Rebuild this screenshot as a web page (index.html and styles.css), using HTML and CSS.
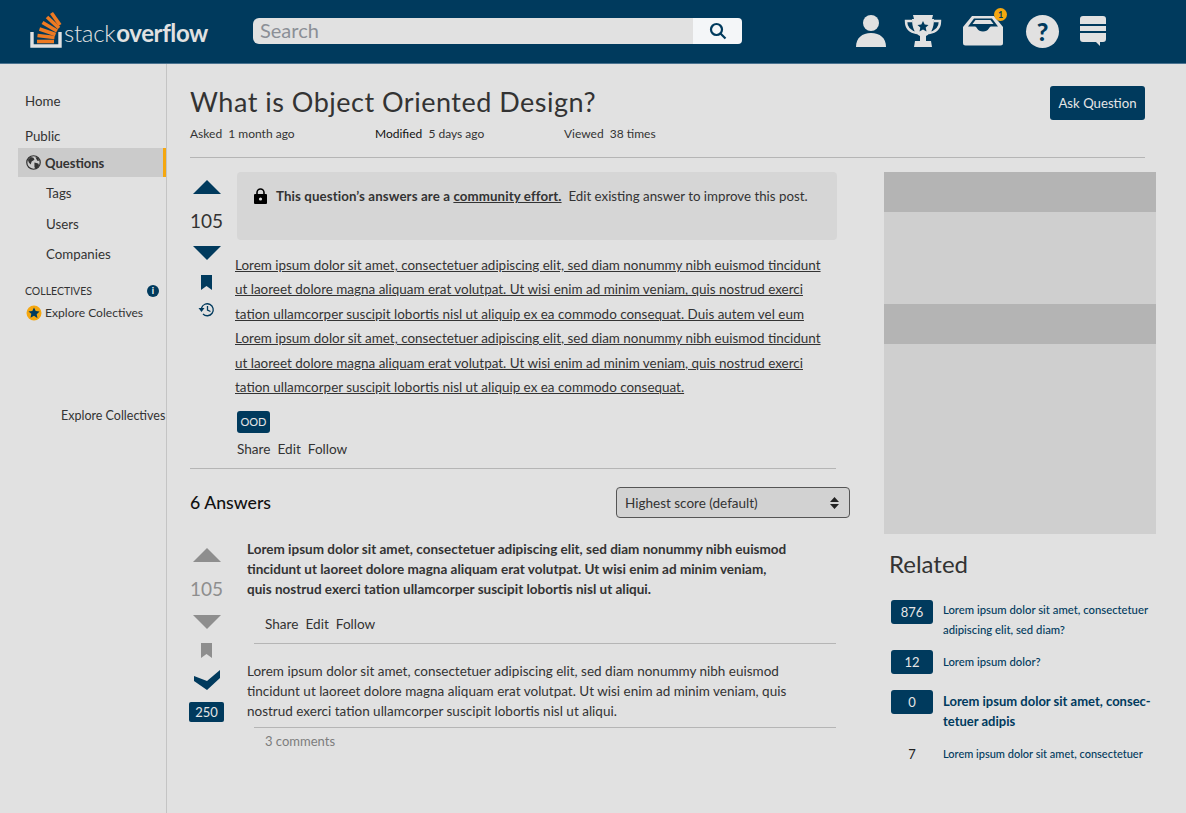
FILE: index.html
```html
<!DOCTYPE html>
<html lang="en">
<head>
  <meta charset="UTF-8" />
  <meta name="viewport" content="width=device-width, initial-scale=1.0" />
  <title>What is Object Oriented Design?</title>
  <link rel="stylesheet" href="styles.css">
</head>
<body>
  <header class="topbar">
    <a class="logo">
      <svg class="logo-mark" width="34" height="36" viewBox="0 0 34 36">
        <path d="M2 20v14h28V20" fill="none" stroke="#e1e1e1" stroke-width="3.4"/>
        <g stroke="#ee7a22" stroke-width="3.6" fill="none">
          <path d="M7 29.500h17"/>
          <path d="M7.500 23.500l17 2"/>
          <path d="M9.500 17l16 5.500"/>
          <path d="M12.500 10.500l14.500 8.500"/>
          <path d="M17 5l12 11"/>
          <path d="M21.500 1l8.500 12"/>
        </g>
      </svg>
      <span class="logo-text">stack<b>overflow</b></span>
    </a>
    <div class="search">
      <span class="search-input">Search</span>
      <span class="search-btn">
        <svg width="18" height="18" viewBox="0 0 18 18" fill="none" stroke="#003a5d" stroke-width="2.200"><circle cx="7.500" cy="7.500" r="5.500"/><path d="M11.500 11.500l5 5"/></svg>
      </span>
    </div>
    <nav class="top-icons">
      <svg width="30" height="34" viewBox="0 0 30 34" fill="#e1e1e1"><circle cx="15" cy="9" r="8"/><path d="M0 33c0-9 6-14 15-14s15 5 15 14z"/></svg>
      <svg width="38" height="34" viewBox="0 0 38 34"><path d="M9 1h20l-1 4H10z" fill="#e1e1e1"/><path d="M8 7H2c0 7 4 11 11 12M30 7h6c0 7-4 11-11 12" fill="none" stroke="#e1e1e1" stroke-width="2.400"/><path d="M8 5h22c0 9-3 15-8 17v5h5l1 6H10l1-6h5v-5C11 20 8 14 8 5z" fill="#e1e1e1"/><path d="M19 7l1.700 3.600 3.800.4-2.800 2.600.8 3.900-3.500-2-3.500 2 .8-3.900-2.800-2.600 3.800-.4z" fill="#003a5d"/></svg>
      <span class="inbox">
        <svg width="40" height="30" viewBox="0 0 40 30"><path d="M9 0h22l9 11v16a2.500 2.500 0 0 1-2.500 2.500h-35A2.500 2.500 0 0 1 0 27V11z" fill="#e1e1e1"/><path d="M11 2.500h18l6 8h-7c-2 0-2 5-8 5s-6-5-8-5H5z" fill="#003a5d"/><path d="M12.500 4h15l3 4h-21z" fill="#e1e1e1"/></svg>
        <i class="inbox-dot">1</i>
      </span>
      <span class="help">?</span>
      <svg width="26" height="32" viewBox="0 0 26 32" fill="#e1e1e1"><path d="M0 4a3 3 0 0 1 3-3h20a3 3 0 0 1 3 3v5H0z"/><rect y="11" width="26" height="5"/><path d="M0 18h26v6a3 3 0 0 1-3 3h-3v4l-4-4H3a3 3 0 0 1-3-3z"/></svg>
    </nav>
  </header>

  <div class="layout">
    <aside class="sidebar">
      <a class="nav-home">Home</a>
      <p class="nav-label">Public</p>
      <a class="nav-active">
        <svg width="15" height="15" viewBox="0 0 16 16"><circle cx="8" cy="8" r="7.200" fill="none" stroke="#333" stroke-width="1.300"/><path d="M5 2l3 1 1 2-3 2-1 3-2-2-1-3zM9 8l4 1 1 2-3 4-2-2z M10 2l3 1 1 3-2 0z" fill="#333"/></svg>
        Questions
      </a>
      <a class="nav-sub">Tags</a>
      <a class="nav-sub">Users</a>
      <a class="nav-sub">Companies</a>
      <div class="collectives-head">
        <span>COLLECTIVES</span>
        <i class="info">i</i>
      </div>
      <a class="collective-link">
        <svg width="16" height="16" viewBox="0 0 16 16"><circle cx="8" cy="8" r="7.500" fill="#f5a70f"/><path d="M8 2.500l1.700 3.600 3.900.5-2.900 2.700.8 3.900L8 10.800l-3.500 1.900.8-3.900L2.400 6.600l3.900-.5z" fill="#003a5d"/></svg>
        Explore Colectives
      </a>
      <p class="stray-link">Explore Collectives</p>
    </aside>

    <main class="content">
      <div class="title-row">
        <div>
          <h1>What is Object Oriented Design?</h1>
          <div class="meta">
            <span class="meta-asked">Asked&nbsp; <em>1 month ago</em></span>
            <span class="meta-modified"><b>Modified</b>&nbsp; <em>5 days ago</em></span>
            <span>Viewed&nbsp; <em>38 times</em></span>
          </div>
        </div>
        <a class="ask-btn">Ask Question</a>
      </div>

      <div class="columns">
        <section class="main-col">
          <div class="post">
            <div class="votes">
              <i class="arrow-up"></i>
              <span class="score">105</span>
              <i class="arrow-down"></i>
              <svg class="bookmark" width="11" height="15" viewBox="0 0 11 15" fill="#003a5d"><path d="M0 0h11v15l-5.500-4L0 15z"/></svg>
              <svg class="history" width="17" height="15" viewBox="0 0 17 15" fill="none" stroke="#003a5d" stroke-width="1.300"><path d="M3.500 6a6 6 0 1 1 1.500 6"/><path d="M9.500 4v4l3 1.500"/><path d="M0.500 6h6L3.500 10z" fill="#003a5d" stroke="none"/></svg>
            </div>
            <div class="post-body">
              <div class="notice">
                <svg width="13" height="16" viewBox="0 0 13 16"><path d="M3 7V4.500a3.500 3.500 0 0 1 7 0V7" fill="none" stroke="#000" stroke-width="1.600"/><rect y="6" width="13" height="10" rx="1"/><circle cx="6.500" cy="11" r="1.600" fill="#e1e1e1"/></svg>
                <p><b>This question’s answers are a <u>community effort.</u></b>&nbsp; Edit existing answer to improve this post.</p>
              </div>
              <p class="lorem">Lorem ipsum dolor sit amet, consectetuer adipiscing elit, sed diam nonummy nibh euismod tincidunt<br>ut laoreet dolore magna aliquam erat volutpat. Ut wisi enim ad minim veniam, quis nostrud exerci<br>tation ullamcorper suscipit lobortis nisl ut aliquip ex ea commodo consequat. Duis autem vel eum<br>Lorem ipsum dolor sit amet, consectetuer adipiscing elit, sed diam nonummy nibh euismod tincidunt<br>ut laoreet dolore magna aliquam erat volutpat. Ut wisi enim ad minim veniam, quis nostrud exerci<br>tation ullamcorper suscipit lobortis nisl ut aliquip ex ea commodo consequat.</p>
              <span class="tag">OOD</span>
              <div class="actions">
                <a>Share</a><a>Edit</a><a>Follow</a>
              </div>
            </div>
          </div>

          <div class="answers-head">
            <h2>6 Answers</h2>
            <div class="sort">
              Highest score (default)
              <svg width="9" height="12" viewBox="0 0 9 12" fill="#222"><path d="M4.500 0L9 5H0zM4.500 12L0 7h9z"/></svg>
            </div>
          </div>

          <div class="answer">
            <div class="votes votes-muted">
              <i class="arrow-up"></i>
              <span class="score">105</span>
              <i class="arrow-down"></i>
              <svg class="bookmark" width="11" height="15" viewBox="0 0 11 15" fill="#8e8e8e"><path d="M0 0h11v15l-5.500-4L0 15z"/></svg>
              <svg class="check" width="26" height="20" viewBox="0 0 26 20" fill="#003a5d"><path d="M0 6l13 5L26 0v8L13 20 0 11z"/></svg>
              <span class="accepted">250</span>
            </div>
            <div class="answer-body">
              <p class="answer-lead">Lorem ipsum dolor sit amet, consectetuer adipiscing elit, sed diam nonummy nibh euismod<br>tincidunt ut laoreet dolore magna aliquam erat volutpat. Ut wisi enim ad minim veniam,<br>quis nostrud exerci tation ullamcorper suscipit lobortis nisl ut aliqui.</p>
              <div class="actions actions-answer">
                <a>Share</a><a>Edit</a><a>Follow</a>
              </div>
              <p class="answer-text">Lorem ipsum dolor sit amet, consectetuer adipiscing elit, sed diam nonummy nibh euismod<br>tincidunt ut laoreet dolore magna aliquam erat volutpat. Ut wisi enim ad minim veniam, quis<br>nostrud exerci tation ullamcorper suscipit lobortis nisl ut aliqui.</p>
              <div class="comments">3 comments</div>
            </div>
          </div>
        </section>

        <aside class="side-col">
          <div class="ad">
            <div class="ad-band"></div>
            <div class="ad-fill"></div>
            <div class="ad-band"></div>
          </div>
          <h3>Related</h3>
          <ul class="related">
            <li class="related-two"><span class="count">876</span><a>Lorem ipsum dolor sit amet, consectetuer<br>adipiscing elit, sed diam?</a></li>
            <li class="related-one"><span class="count">12</span><a>Lorem ipsum dolor?</a></li>
            <li class="related-big"><span class="count">0</span><a>Lorem ipsum dolor sit amet, consec-<br>tetuer adipis</a></li>
            <li class="related-plain"><span class="count">7</span><a>Lorem ipsum dolor sit amet, consectetuer</a></li>
          </ul>
        </aside>
      </div>
    </main>
  </div>
</body>
</html>
```

FILE: styles.css
```css
* {
  box-sizing: border-box;
}
html, body {
  height: 100%;
}
body {
  margin: 0;
  overflow: hidden;
  background: #e1e1e1;
  color: #333;
  font-family: 'Lato', 'Open Sans', sans-serif;
  font-size: 13px;
}
p, h1, h2, h3, ul {
  margin: 0;
  padding: 0;
}
em {
  font-style: normal;
}

/* top bar */
.topbar {
  height: 64px;
  background: #003a5d;
  border-bottom: 1px solid #4a7390;
  display: flex;
  align-items: center;
  padding: 0 0 1px 30px;
}
.logo {
  display: flex;
  align-items: flex-end;
  width: 223px;
  padding-bottom: 3px;
}
.logo-mark {
  margin-right: 0;
}
.logo-text {
  color: #e1e1e1;
  font-size: 24px;
  letter-spacing: -0.3px;
  line-height: 30px;
  font-weight: 300;
}
.logo-text b {
  font-weight: 700;
  letter-spacing: -0.4px;
  margin-left: 1px;
}
.search {
  width: 489px;
  height: 26px;
  display: flex;
  border-radius: 6px 4px 4px 6px;
  overflow: hidden;
}
.search-input {
  flex: 1;
  background: #e1e1e1;
  color: #8b8f96;
  font-size: 20px;
  line-height: 25px;
  padding-left: 7px;
}
.search-btn {
  width: 49px;
  background: #f4f6f8;
  display: flex;
  align-items: center;
  justify-content: center;
}
.top-icons {
  display: flex;
  align-items: center;
  margin-left: 114px;
}
.top-icons > svg:nth-child(1) {
  margin-right: 18px;
}
.top-icons > svg:nth-child(2) {
  margin-right: 21px;
}
.inbox {
  position: relative;
  display: flex;
  margin-right: 23px;
}
.inbox-dot {
  position: absolute;
  top: -8px;
  right: -4px;
  width: 13px;
  height: 13px;
  border-radius: 50%;
  background: #f5a70f;
  color: #003a5d;
  font-size: 9px;
  font-style: normal;
  font-weight: 700;
  line-height: 13px;
  text-align: center;
}
.help {
  width: 33px;
  height: 33px;
  border-radius: 50%;
  background: #e1e1e1;
  color: #003a5d;
  font-size: 25px;
  font-weight: 900;
  line-height: 33px;
  text-align: center;
  margin-right: 21px;
}

/* page */
.layout {
  display: flex;
  height: 749px;
}
.sidebar {
  width: 167px;
  flex-shrink: 0;
  border-right: 1px solid #c4c4c4;
  padding: 28px 0 0 18px;
  font-size: 13.300px;
}
.nav-home {
  display: block;
  padding-left: 7px;
  line-height: 18px;
}
.nav-label {
  padding-left: 7px;
  margin-top: 17px;
  line-height: 18px;
}
.nav-active {
  display: flex;
  align-items: center;
  gap: 4px;
  height: 29px;
  margin-top: 3px;
  padding-left: 8px;
  background: #cbcbcb;
  border-right: 3px solid #f5a70f;
  font-size: 13px;
  font-weight: 700;
}
.nav-sub {
  display: block;
  padding-left: 28px;
  margin-top: 12px;
  height: 18.500px;
  line-height: 18.500px;
}
.nav-active + .nav-sub {
  margin-top: 7px;
}
.collectives-head {
  display: flex;
  justify-content: space-between;
  align-items: center;
  font-size: 10.500px;
  padding: 0 7px 0 7px;
  margin-top: 20px;
  height: 14px;
}
.info {
  width: 12px;
  height: 12px;
  border-radius: 50%;
  background: #003a5d;
  color: #fff;
  font-size: 9px;
  font-style: normal;
  font-weight: 700;
  line-height: 12px;
  text-align: center;
}
.collective-link {
  display: flex;
  align-items: center;
  gap: 3px;
  padding-left: 8px;
  margin-top: 7px;
  font-size: 12.100px;
}
.stray-link {
  margin-top: 87px;
  margin-left: 43px;
  font-size: 12.500px;
  white-space: nowrap;
}
.content {
  flex: 1;
  padding: 20px 30px 0 23px;
}
.title-row {
  display: flex;
  justify-content: space-between;
  align-items: flex-start;
  width: 955px;
  height: 74px;
  border-bottom: 1px solid #b5b5b5;
}
h1 {
  font-size: 27px;
  font-weight: 400;
  line-height: 36px;
  letter-spacing: 0.5px;
}
.meta {
  display: flex;
  font-size: 12px;
  margin-top: 6px;
  line-height: 15px;
}
.meta b {
  font-weight: 400;
  color: #111;
}
.meta-asked {
  width: 185px;
}
.meta-modified {
  width: 189px;
}
.ask-btn {
  margin-top: 2px;
  width: 95px;
  height: 34px;
  background: #003a5d;
  color: #e6e6e6;
  border-radius: 3px;
  font-size: 13.200px;
  line-height: 34px;
  text-align: center;
}
.columns {
  display: flex;
  margin-top: 14px;
}
.main-col {
  width: 694px;
}
.post {
  display: flex;
  width: 646px;
  border-bottom: 1px solid #b5b5b5;
  padding-bottom: 10px;
}
.votes {
  width: 45px;
  flex-shrink: 0;
  display: flex;
  flex-direction: column;
  align-items: center;
  padding-right: 12px;
  padding-top: 8px;
}
.arrow-up {
  width: 0;
  height: 0;
  border: 14px solid transparent;
  border-top: 0;
  border-bottom: 14px solid #003a5d;
}
.arrow-down {
  width: 0;
  height: 0;
  border: 14px solid transparent;
  border-bottom: 0;
  border-top: 14px solid #003a5d;
}
.score {
  font-size: 19px;
  line-height: 24px;
  margin: 15px 0 13px;
}
.bookmark {
  margin-top: 15px;
}
.history {
  margin-top: 12px;
}
.post-body {
  flex: 1;
}
.notice {
  margin-left: 2px;
  width: 600px;
  height: 68px;
  background: #d6d6d6;
  border-radius: 4px;
  display: flex;
  align-items: flex-start;
  gap: 9px;
  padding: 16px 17px;
  font-size: 13.300px;
}
.notice p {
  line-height: 16px;
  white-space: nowrap;
}
.notice b {
  letter-spacing: 0.1px;
}
.notice u, .lorem {
  text-decoration: underline;
}
.lorem {
  margin-top: 13px;
  font-size: 13.450px;
  line-height: 24.400px;
  white-space: nowrap;
}
.tag {
  display: inline-block;
  margin: 12px 0 0 2px;
  width: 33px;
  height: 22px;
  background: #003a5d;
  color: #e6e6e6;
  border-radius: 3px;
  font-size: 11px;
  line-height: 22px;
  text-align: center;
}
.actions {
  display: flex;
  gap: 7px;
  margin: 7px 0 0 2px;
  font-size: 13.600px;
  line-height: 18px;
}
.answers-head {
  display: flex;
  align-items: center;
  justify-content: space-between;
  height: 31px;
  margin-top: 18px;
  width: 660px;
}
h2 {
  font-size: 17.700px;
  font-weight: 500;
  color: #111;
}
.sort {
  width: 234px;
  height: 31px;
  border: 1px solid #555;
  border-radius: 4px;
  background: #d2d2d2;
  display: flex;
  align-items: center;
  justify-content: space-between;
  padding: 0 10px 0 8px;
  font-size: 13.500px;
}
.answer {
  display: flex;
  margin-top: 21px;
}
.votes-muted {
  width: 57px;
  padding-right: 24px;
  padding-top: 9px;
}
.votes-muted .arrow-up {
  border-bottom-color: #8e8e8e;
}
.votes-muted .arrow-down {
  border-top-color: #8e8e8e;
}
.votes-muted .score {
  color: #8e8e8e;
  margin: 15px 0 14px;
}
.votes-muted .bookmark {
  margin-top: 14px;
}
.check {
  margin-top: 12px;
}
.accepted {
  margin-top: 12px;
  width: 35px;
  height: 20px;
  background: #003a5d;
  color: #e6e6e6;
  border-radius: 2px;
  font-size: 13px;
  line-height: 20px;
  text-align: center;
}
.answer-body {
  width: 589px;
}
.answer-lead, .answer-text {
  font-size: 13.500px;
  line-height: 20px;
  white-space: nowrap;
}
.answer-lead {
  font-weight: 700;
}
.actions-answer {
  margin: 0 0 0 7px;
  padding: 16px 0 10px 11px;
  border-bottom: 1px solid #b5b5b5;
  width: 582px;
}
.answer-text {
  margin-top: 17px;
}
.comments {
  margin-left: 7px;
  margin-top: 6px;
  padding: 5px 0 0 11px;
  border-top: 1px solid #b5b5b5;
  width: 582px;
  color: #7d7d7d;
}
.side-col {
  width: 272px;
}
.ad {
  height: 362px;
  background: #cfcfcf;
  display: flex;
  flex-direction: column;
}
.ad-band {
  height: 40px;
  background: #b4b4b4;
}
.ad-fill {
  height: 92px;
}
h3 {
  margin: 15px 0 0 5px;
  font-size: 24px;
  font-weight: 400;
  line-height: 30px;
}
.related {
  list-style: none;
  margin: 21px 0 0 7px;
}
.related li {
  display: flex;
  align-items: flex-start;
  font-size: 11.300px;
  line-height: 20px;
  color: #003a5d;
}
.related a {
  white-space: nowrap;
  font-weight: 500;
}
.count {
  width: 42px;
  height: 24px;
  margin-right: 10px;
  background: #003a5d;
  color: #e6e6e6;
  border-radius: 3px;
  font-size: 13px;
  line-height: 24px;
  text-align: center;
  flex-shrink: 0;
}
.related-two {
  margin-bottom: 10px;
}
.related-one {
  line-height: 24px !important;
  margin-bottom: 16px;
}
.related-big {
  font-size: 13px !important;
  margin-bottom: 13px;
}
.related-big a {
  font-weight: 700;
  padding-top: 1px;
}
.related-plain {
  font-size: 11px !important;
}
.related-plain .count {
  background: none;
  color: #222;
  height: 20px;
  line-height: 20px;
}
```
